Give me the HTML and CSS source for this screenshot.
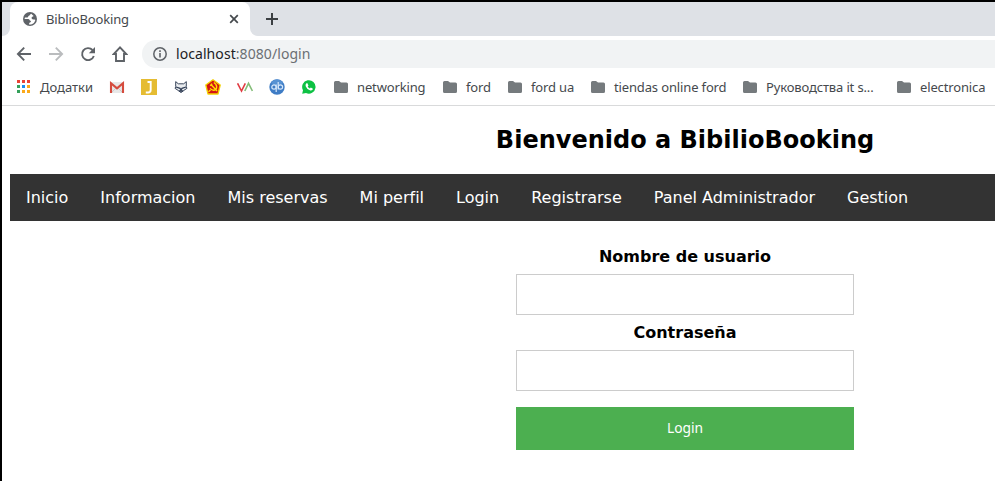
FILE: index.html
```html
<!DOCTYPE html>
<html lang="es">
<head>
<meta charset="utf-8">
<title>BiblioBooking</title>
<link rel="stylesheet" href="styles.css">
</head>
<body>
<svg class="defs" aria-hidden="true">
  <symbol id="folder" viewBox="0 0 16 16"><path d="M1 3.500Q1 2 2.500 2H6l2 1.500h5.500Q15 3.500 15 5v7.500q0 1.500-1.500 1.500h-11Q1 14 1 12.500z" fill="#757a7d"/></symbol>
</svg>
<div class="window">
  <div class="tabstrip">
    <div class="edge edge-left"></div>
    <div class="tab">
      <svg class="globe" width="16" height="16" viewBox="0 0 16 16"><circle cx="8" cy="8" r="7" fill="#5f6368"/><path d="M9.300 2.700c-1.500.500-1 1.500-2.300 2-.900.300-.600 1.300-1.500 1.800H3L2.500 8h3.700c1.300.200 1.300 1.500 2.300 1.800.900.400.400 1.500-.700 1.700-.8.300-.700 1.700-.7 2 3.200.400 6-2 6.200-4.800-1.200-.700-2.800.200-3.500-1-.600-1.300.200-2 1.200-2.200.700-.200.500-1.300-.2-1.300z" fill="#fff"/></svg>
      <span class="tab-title">BiblioBooking</span>
      <svg width="10" height="10" viewBox="0 0 10 10"><path d="M1.200 1.200l7.600 7.600M8.800 1.200L1.200 8.800" stroke="#45494d" stroke-width="1.700"/></svg>
    </div>
    <div class="edge edge-right">
      <svg width="12" height="12" viewBox="0 0 12 12"><path d="M6 0v12M0 6h12" stroke="#3c4043" stroke-width="2"/></svg>
    </div>
  </div>
  <div class="toolbar">
    <svg width="16" height="16" viewBox="0 0 16 16"><path d="M15 8H2.200M8.200 1.700L1.900 8l6.300 6.300" fill="none" stroke="#5f6368" stroke-width="1.900"/></svg>
    <svg width="16" height="16" viewBox="0 0 16 16"><path d="M1 8h12.800M7.800 1.700L14.100 8l-6.300 6.300" fill="none" stroke="#babcbe" stroke-width="1.900"/></svg>
    <svg width="16" height="16" viewBox="0 0 16 16"><path d="M13.800 10A6 6 0 1 1 12.500 4" fill="none" stroke="#5f6368" stroke-width="1.900"/><path d="M15 1v6.200H8.800z" fill="#5f6368"/></svg>
    <svg width="16" height="16" viewBox="0 0 16 16"><path d="M8 1.400L1.800 8H4v7h8V8h2.200z" fill="none" stroke="#5f6368" stroke-width="1.900"/></svg>
    <div class="address">
      <svg width="16" height="16" viewBox="0 0 16 16"><circle cx="8" cy="8" r="6.200" fill="none" stroke="#5f6368" stroke-width="1.500"/><path d="M8 7v4.500M8 4.300v1.600" stroke="#5f6368" stroke-width="1.600"/></svg>
      <span class="url">localhost<span class="url-rest">:8080/login</span></span>
    </div>
  </div>
  <div class="bookmarks">
    <div class="apps">
      <svg width="14" height="14" viewBox="0 0 14 14"><g fill="#ea4335"><path d="M0 0h3v3H0zM5 0h3v3H5zM10 0h3v3h-3z"/></g><path d="M0 5h3v3H0zM0 10h3v3H0z" fill="#34a05a"/><path d="M5 5h3v3H5z" fill="#1a8cf0"/><path d="M10 5h3v3h-3zM5 10h3v3H5zM10 10h3v3h-3z" fill="#fba91a"/></svg>
      <span>Додатки</span>
    </div>
    <div class="icons">
      <svg width="16" height="16" viewBox="0 0 16 16"><path d="M1 3h14v11H1z" fill="#e8e8e8"/><path d="M3 13l5-5 5 5" fill="none" stroke="#ccc"/><path d="M2 14V4.200l6 5.200 6-5.200V14" fill="none" stroke="#d54b3d" stroke-width="2.100"/></svg>
      <svg width="16" height="16" viewBox="0 0 16 16"><path d="M0 0h16v16H0z" fill="#e5bc32"/><path d="M6.500 3H9.700v7.700q0 2.800-2.700 2.800H4.800" fill="none" stroke="#fff" stroke-width="1.900"/></svg>
      <svg width="16" height="16" viewBox="0 0 16 16"><path d="M2.700 2.600l2.600 2.200h5.400l2.600-2.200v5l.6 1.800-3.500 2.300L8 13.600l-2.400-1.900-3.500-2.300.6-1.800z" fill="#e9ecef" stroke="#39465b" stroke-width="1"/><path d="M3 8l4 1.400L8 11l1-1.600L13 8M5.800 12h4.400" fill="none" stroke="#303e55" stroke-width="1.300"/></svg>
      <svg width="16" height="16" viewBox="0 0 16 16"><path d="M8 .8L15.200 6 13 15H3L.8 6z" fill="#d41414" stroke="#f3d500" stroke-width="1.300" stroke-linejoin="round"/><path d="M8.800 3.500c4 2.300 3.600 7.300.2 7.700-1.800.2-3-.8-3.900-1.800M3.500 12.800l2-1.900M5.200 6.800l1.900-2M6.200 5.700l5.800 6.200" fill="none" stroke="#ffe000" stroke-width="1.400"/></svg>
      <svg width="16" height="16" viewBox="0 0 16 16"><path d="M.6 4.300L4.500 12l3.800-7.700" fill="none" stroke="#e13c43" stroke-width="1.600"/><path d="M7.800 12l3.700-7.700L15.400 12" fill="none" stroke="#84bd78" stroke-width="1.600"/></svg>
      <svg width="16" height="16" viewBox="0 0 16 16"><circle cx="8" cy="8" r="7.700" fill="#3e7cc5"/><path d="M2 4a7 7 0 0 1 12 0L8 7z" fill="#5792d3"/><g fill="none" stroke="#d5e7fa" stroke-width="1.200"><circle cx="5" cy="8" r="2.200"/><path d="M7.200 5.500V13M9.200 3v7.500"/><circle cx="11.400" cy="8" r="2.200"/></g></svg>
      <svg width="16" height="16" viewBox="0 0 16 16"><path d="M1.200 14.800L2 11.200A6.700 6.700 0 1 1 5 14z" fill="#0dc143"/><path d="M5.200 4.500l1-.4 1.300 2.300-.8 1q.7 1.400 2.200 2.100l.9-.9 2.100 1.200c-.2 1.600-1.700 2-3 1.500Q5.700 10.200 4.700 7.300q-.5-1.700.5-2.800z" fill="#fff"/></svg>
    </div>
    <div class="folders">
      <div class="folder"><svg width="16" height="16"><use href="#folder"/></svg><span>networking</span></div>
      <div class="folder"><svg width="16" height="16"><use href="#folder"/></svg><span>ford</span></div>
      <div class="folder"><svg width="16" height="16"><use href="#folder"/></svg><span>ford ua</span></div>
      <div class="folder"><svg width="16" height="16"><use href="#folder"/></svg><span>tiendas online ford</span></div>
      <div class="folder"><svg width="16" height="16"><use href="#folder"/></svg><span>Руководства it s...</span></div>
      <div class="folder"><svg width="16" height="16"><use href="#folder"/></svg><span>electronica</span></div>
    </div>
  </div>
  <main class="page">
    <h2>Bienvenido a BibilioBooking</h2>
    <nav class="menu">
      <a>Inicio</a><a>Informacion</a><a>Mis reservas</a><a>Mi perfil</a><a>Login</a><a>Registrarse</a><a>Panel Administrador</a><a>Gestion</a>
    </nav>
    <form class="login">
      <label for="user">Nombre de usuario</label>
      <input id="user" type="text">
      <label for="pass">Contraseña</label>
      <input id="pass" type="password">
      <button type="button">Login</button>
    </form>
  </main>
</div>
</body>
</html>
```
FILE: styles.css
```css
* { box-sizing: border-box; }
html, body { margin: 0; height: 100%; overflow: hidden; }
body { background: #fff; font-family: "DejaVu Sans", sans-serif; font-size: 16px; }
svg { display: block; flex: none; }
.defs { display: none; }

.window {
  height: 481px;
  overflow: hidden;
  border-top: 2px solid #000;
  border-left: 2px solid #000;
}

/* Browser chrome */
.tabstrip, .toolbar, .bookmarks {
  display: flex;
  align-items: center;
  font-family: "Noto Sans", sans-serif;
  font-size: 13px;
  color: #45494d;
  white-space: nowrap;
}
.tabstrip {
  height: 34px;
  align-items: stretch;
  background: linear-gradient(#dee1e6 12px, #fff 12px);
}
.edge { background: #dee1e6; }
.edge-left { width: 8px; border-bottom-right-radius: 8px; }
.edge-right {
  flex: 1;
  display: flex;
  align-items: center;
  padding-left: 16px;
  border-bottom-left-radius: 8px;
}
.tab {
  width: 240px;
  display: flex;
  align-items: center;
  padding: 0 11px 0 12px;
  background: #fff;
  border-radius: 8px 8px 0 0;
}
.tab-title { flex: 1; margin-left: 8px; letter-spacing: -0.15px; }

.toolbar { height: 36px; padding-left: 14px; gap: 16px; }
.address {
  flex: 1;
  display: flex;
  align-items: center;
  height: 28px;
  margin-left: -2px;
  padding-left: 10px;
  gap: 8px;
  background: #f1f3f4;
  border-radius: 14px 0 0 14px;
  font-size: 14px;
  letter-spacing: 0.07px;
  color: #202124;
}
.url { padding-bottom: 2px; }
.url-rest { color: #6b6f73; }

.bookmarks {
  height: 34px;
  padding: 0 0 3px 15px;
  border-bottom: 1px solid #d9dadb;
}
.apps { flex: none; display: flex; align-items: center; width: 92px; gap: 9px; }
.icons { flex: none; display: flex; gap: 16px; margin-right: 16px; }
.folders {
  flex: none;
  display: grid;
  grid-template-columns: 109px 65px 83px 152px 154px auto;
  letter-spacing: -0.14px;
}
.folder { display: flex; align-items: center; gap: 8px; }

/* Page, laid out for a full-width screen */
.page { width: 1366px; padding: 20px 8px 0; }
h2 {
  margin: 0 0 20px;
  font-size: 24px;
  line-height: 28px;
  text-align: center;
}
.menu { display: flex; height: 47px; background: #333; color: #fff; }
.menu a { padding: 14px 16px; line-height: 19px; }
.login {
  display: flex;
  flex-direction: column;
  width: 338px;
  margin: 26px auto 0;
  text-align: center;
}
.login label { font-weight: bold; line-height: 19px; }
.login input {
  height: 41px;
  margin: 8px 0;
  padding: 12px 20px;
  border: 1px solid #ccc;
  background: #fff;
}
.login button {
  height: 43px;
  margin: 8px 0;
  padding: 0 0 2px;
  border: 0;
  background: #4caf50;
  color: #fff;
  font: 13.8px "Noto Sans", sans-serif;
}
```
